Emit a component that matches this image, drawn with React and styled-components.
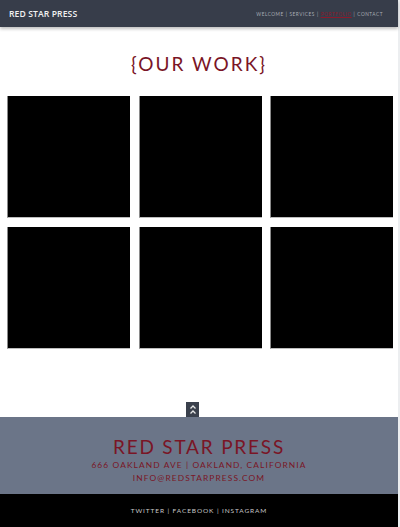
import styled, { createGlobalStyle } from 'styled-components';

const Global = createGlobalStyle`
    html, body {
        margin: 0;
        padding: 0;
        background: #fff;
    }
    body {
        font-family: "Open Sans", "Liberation Sans", sans-serif;
    }
`;

const Page = styled.div`
    width: 398px;
    border-right: 2px solid #eceef0;
    min-height: 527px;
    display: flex;
    flex-direction: column;
`;

const Header = styled.header`
    height: 27px;
    background: #373d4a;
    box-shadow: 0 2px 3px rgba(0, 0, 0, 0.25);
    display: flex;
    align-items: center;
    justify-content: space-between;
    padding: 0 15px 0 9px;
`;

const Brand = styled.div`
    color: #f2f2f2;
    font-family: "Open Sans", sans-serif;
    font-weight: 600;
    font-size: 8.6px;
    letter-spacing: 0.1px;
`;

const Nav = styled.nav`
    display: flex;
    gap: 2px;
    font-family: "Lato", sans-serif;
    font-size: 4.7px;
    letter-spacing: 0.55px;
    color: #a9adb5;
`;

const NavLink = styled.span`
    color: ${p => (p.$active ? '#8c1a2b' : '#a9adb5')};
    text-decoration: ${p => (p.$active ? 'underline' : 'none')};
`;

const Title = styled.h1`
    margin: 27px 0 0;
    text-align: center;
    font-family: "Lato", sans-serif;
    font-weight: 400;
    font-size: 19px;
    letter-spacing: 2px;
    color: #7a1526;
    line-height: 20px;
`;

const Grid = styled.div`
    margin-top: 22px;
    padding: 0 6px 0 7px;
    display: grid;
    grid-template-columns: repeat(3, 123px);
    column-gap: 8.5px;
    row-gap: 9px;
`;

const Tile = styled.div`
    height: 122px;
    background: #000;
    border-left: 1px solid #8a8a8a;
    border-bottom: 1px solid #bdbdbd;
    box-sizing: border-box;
`;

const UpRow = styled.div`
    margin-top: auto;
    display: flex;
    justify-content: center;
    padding-right: 13px;
`;

const UpButton = styled.div`
    width: 13px;
    height: 15px;
    background: #3a404c;
    display: flex;
    flex-direction: column;
    align-items: center;
    justify-content: center;
    gap: 1px;
`;

const Footer = styled.footer`
    height: 77px;
    background: #6b7588;
    display: flex;
    flex-direction: column;
    align-items: center;
    padding-top: 20px;
    box-sizing: border-box;
    color: #7a1526;
    font-family: "Lato", sans-serif;
`;

const FootName = styled.div`
    font-size: 19px;
    letter-spacing: 1.8px;
    line-height: 20px;
`;

const FootLine = styled.div`
    font-size: 8.4px;
    letter-spacing: 1.1px;
    line-height: 12px;
    margin-top: ${p => p.$gap || 0}px;
`;

const Social = styled.div`
    height: 33px;
    background: #000;
    display: flex;
    align-items: center;
    justify-content: center;
    color: #c8c8c8;
    font-family: "Lato", sans-serif;
    font-size: 6.5px;
    letter-spacing: 0.9px;
`;

const Chevron = () => (
    <svg width="6" height="4" viewBox="0 0 6 4">
        <path d="M0.5 3.5 L3 1 L5.5 3.5" stroke="#e6e6e6" strokeWidth="1.3" fill="none" />
    </svg>
);

function App() {
    return (
        <Page>
            <Global />
            <Header>
                <Brand>RED STAR PRESS</Brand>
                <Nav>
                    <NavLink>WELCOME</NavLink>|
                    <NavLink>SERVICES</NavLink>|
                    <NavLink $active>PORTFOLIO</NavLink>|
                    <NavLink>CONTACT</NavLink>
                </Nav>
            </Header>
            <Title>{'{OUR WORK}'}</Title>
            <Grid>
                {[0, 1, 2, 3, 4, 5].map(i => <Tile key={i} />)}
            </Grid>
            <UpRow>
                <UpButton>
                    <Chevron />
                    <Chevron />
                </UpButton>
            </UpRow>
            <Footer>
                <FootName>RED STAR PRESS</FootName>
                <FootLine $gap={2}>666 OAKLAND AVE | OAKLAND, CALIFORNIA</FootLine>
                <FootLine $gap={1}>INFO@REDSTARPRESS.COM</FootLine>
            </Footer>
            <Social>TWITTER | FACEBOOK | INSTAGRAM</Social>
        </Page>
    );
}

export default App;
